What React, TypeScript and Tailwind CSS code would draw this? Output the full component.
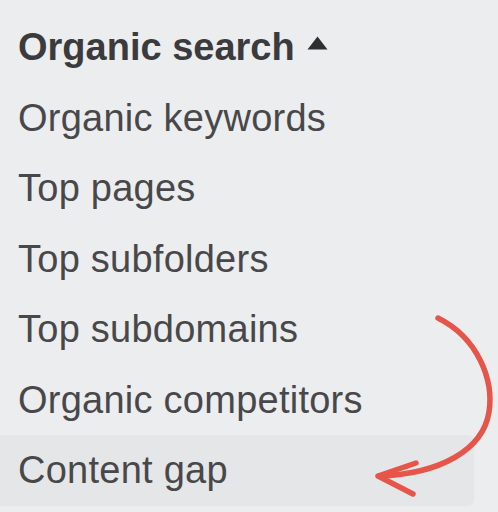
const items = [
  "Organic keywords",
  "Top pages",
  "Top subfolders",
  "Top subdomains",
  "Organic competitors",
  "Content gap",
];

export default function App() {
  return (
    <div
      className="relative w-[498px] h-[512px] overflow-hidden bg-[#ecedef]"
      style={{ fontFamily: '"Liberation Sans", Arial, sans-serif' }}
    >
      <div className="flex flex-col pt-[12px]">
        <div className="flex items-center h-[70.5px] pl-[18px] gap-[12px]">
          <span className="text-[38px] font-bold text-[#3b3b3d] leading-none">Organic search</span>
          <svg width="21" height="14" viewBox="0 0 21 14" className="mt-[-8px]">
            <path d="M10.5 0.5 L20.5 13.5 L0.5 13.5 Z" fill="#2f2f31" />
          </svg>
        </div>
        {items.map((label, i) => (
          <div
            key={label}
            className={`flex items-center h-[70.5px] pl-[18px] w-[474px] rounded-r-md ${
              i === items.length - 1 ? "bg-[#e5e6e8] h-[68px]" : ""
            }`}
          >
            <span className="text-[38px] tracking-[0.25px] text-[#48484a] leading-none">{label}</span>
          </div>
        ))}
      </div>

      {/* annotation arrow */}
      <svg className="absolute left-0 top-0 pointer-events-none" width="498" height="512" viewBox="0 0 498 512">
        <g fill="none" stroke="#e6554a" strokeWidth="5.5" strokeLinecap="round" strokeLinejoin="round">
          <path d="M438 318 C 478 338, 494 380, 489 412 C 483 450, 440 474, 379 476" />
          <path d="M416 463 L378 476 L413 494" />
        </g>
      </svg>
    </div>
  );
}
